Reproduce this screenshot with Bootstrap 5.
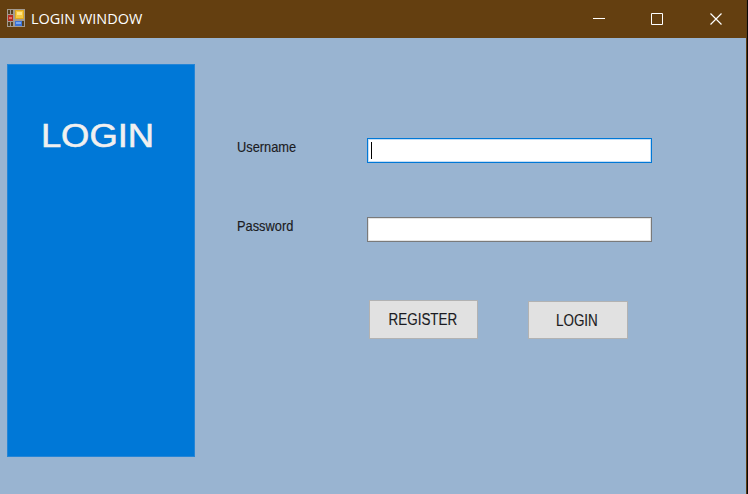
<!DOCTYPE html>
<html lang="en">
<head>
<meta charset="utf-8">
<meta name="viewport" content="width=device-width, initial-scale=1">
<title>LOGIN WINDOW</title>
<link href="https://cdn.jsdelivr.net/npm/bootstrap@5.3.0/dist/css/bootstrap.min.css" rel="stylesheet">
<style>
body{background:#99b4d1;font-family:"Liberation Sans",Arial,sans-serif;color:#1b1b22}
.app-window{width:748px;height:494px;background:#99b4d1;border-right:1px solid #0c0805}
.app-frame{border-right:1px solid #5c3c14}
.title-bar{height:38px;background:#643f10;color:#fff;padding-left:7px;padding-right:1px}
.app-icon{margin-bottom:2px}
.title-text{font:15px/20px "Open Sans","Noto Sans",sans-serif;margin-left:6px;padding-bottom:2px;transform:scaleX(.963);transform-origin:left}
.win-btn{width:58px;height:38px;background:none;border:0;padding:0}
.side-panel{width:188px;height:393px;margin:26px 0 0 7px;background:#0078d7;border:1px solid #2585d6;padding:50px 7px 0 0}
.side-title{font-size:34px;line-height:40px;color:#f0f0f0;-webkit-text-stroke:.6px #f0f0f0;transform:scaleX(1.07)}
.login-form{margin:100px 0 0 42px;width:420px}
.field-row{height:25px;margin-bottom:54px}
.field-label{width:130px;font-size:14.5px;line-height:17px;padding-top:1px;-webkit-text-stroke:.15px}
.field-label span,.form-btn span{display:inline-block;transform:scaleX(.885)}
.field-label span{transform-origin:left}
.text-field{width:285px;height:25px;border:1px solid #7a7a7a;border-radius:0;padding:3px;box-shadow:inset 0 0 0 1px #e4e4e4}
.text-field.active{border-color:#0078d7;box-shadow:inset 0 0 0 1px #c5def5}
.caret{width:1px;height:17px;background:#000}
.form-btn{background:#e1e1e1;border:1px solid #b2b2b2;border-radius:0;color:#1b1b22;font-size:16px;line-height:20px;padding:0;-webkit-text-stroke:.15px}
.form-btn span{transform:scaleX(.84)}
.btn-register{width:109px;height:39px;padding-right:2px}
.btn-login{width:100px;height:38px;margin-left:50px;margin-top:1px;padding:1px 2px 0 0}
.btn-line{margin-left:132px;margin-top:58px}
</style>
<script src="https://cdn.jsdelivr.net/npm/bootstrap@5.3.0/dist/js/bootstrap.bundle.min.js"></script>
</head>
<body class="overflow-hidden">
<div class="app-window">
 <div class="app-frame h-100">
  <header class="title-bar d-flex align-items-center">
   <svg class="app-icon" width="18" height="18" viewBox="0 0 18 18" shape-rendering="crispEdges" aria-hidden="true">
    <path fill="#a39b91" d="M0 0h18v18H0z"/>
    <path fill="#54401f" d="M1 1h5v4H1zM1 13h5v4H1zM15 12h2v5h-2z"/>
    <path fill="#a39b91" d="M3 1h1v4H3zM3 13h1v4H3z"/>
    <path fill="#b52b20" d="M1 6h5v6H1z"/><path fill="#ea6f62" d="M2 8h3v2H2z"/>
    <path fill="#dfa91e" d="M8 1h9v9H8z"/><path fill="#f5c842" d="M9 2h7v7H9z"/><path fill="#ffe487" d="M10 3h5v3h-5z"/>
    <path fill="#3b72d8" d="M8 12h7v5H8z"/><path fill="#76a8f2" d="M9 13h5v2H9z"/>
   </svg>
   <span class="title-text text-nowrap">LOGIN WINDOW</span>
   <div class="d-flex ms-auto">
    <button class="win-btn" aria-label="Minimize"><svg class="d-block" width="58" height="38"><path d="M22 18.500h12" stroke="#fff"/></svg></button>
    <button class="win-btn" aria-label="Maximize"><svg class="d-block" width="58" height="38"><path d="M22.500 13.500h11v11h-11z" stroke="#fff" fill="none"/></svg></button>
    <button class="win-btn" aria-label="Close"><svg class="d-block" width="58" height="38"><path d="M23.500 13.500l11 11m0-11l-11 11" stroke="#fff" stroke-width="1.200"/></svg></button>
   </div>
  </header>
  <main class="d-flex align-items-start">
   <aside class="side-panel text-center flex-shrink-0"><div class="side-title">LOGIN</div></aside>
   <form class="login-form">
    <div class="field-row d-flex">
     <label class="field-label flex-shrink-0"><span>Username</span></label>
     <div class="form-control text-field active" role="textbox" aria-label="Username"><div class="caret"></div></div>
    </div>
    <div class="field-row d-flex mb-0">
     <label class="field-label flex-shrink-0"><span>Password</span></label>
     <div class="form-control text-field" role="textbox" aria-label="Password"></div>
    </div>
    <div class="btn-line d-flex align-items-start">
     <button type="button" class="btn form-btn btn-register"><span>REGISTER</span></button>
     <button type="button" class="btn form-btn btn-login"><span>LOGIN</span></button>
    </div>
   </form>
  </main>
 </div>
</div>
</body>
</html>
